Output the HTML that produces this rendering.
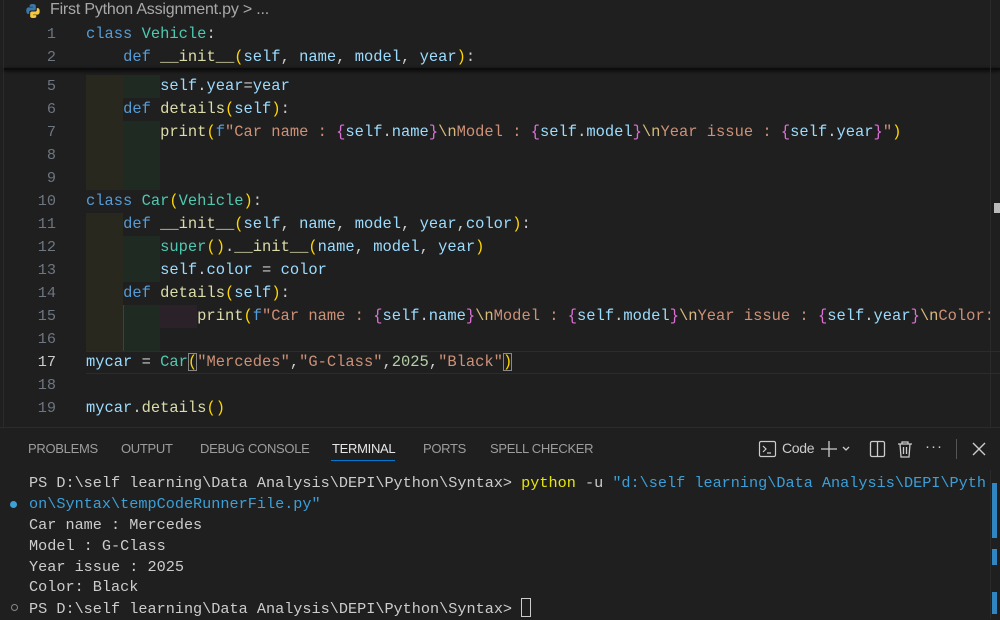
<!DOCTYPE html>
<html><head><meta charset="utf-8">
<style>
*{margin:0;padding:0;box-sizing:border-box}
body{width:1000px;height:619px;background:#1f1f1f;overflow:hidden;position:relative;font-family:"Liberation Mono",monospace;}
.ln{position:absolute;left:0;width:56px;text-align:right;color:#6e7681;font-size:15.2px;line-height:23px;height:23px;margin-top:1px}
.cl{position:absolute;left:86px;font-size:15.45px;line-height:23px;height:23px;white-space:pre;color:#cccccc;margin-top:1px}
.k{color:#569cd6}.c{color:#4ec9b0}.f{color:#dcdcaa}.v{color:#9cdcfe}.s{color:#ce9178}.y{color:#ffd700}.p{color:#da70d6}.e{color:#d7ba7d}.w{color:#cccccc}
.g1{position:absolute;left:86px;width:37px;background:#28281f}
.g2{position:absolute;left:123px;width:37px;background:#1f2a22}
.g3{position:absolute;left:160px;width:37px;background:#2b2129}
.gl{position:absolute;width:1px;background:#404040}
.tab{position:absolute;top:441px;font-family:"Liberation Sans",sans-serif;font-size:13px;color:#9d9d9d;letter-spacing:-0.3px}
.t{position:absolute;left:29px;font-size:15.2px;line-height:21px;white-space:pre;color:#cccccc}
.b{color:#3b9fd8}.yy{color:#e5e510}
</style></head><body>
<div style="position:absolute;left:3px;top:0;width:1px;height:427px;background:#2b2b2b"></div>
<svg style="position:absolute;left:25px;top:3px" width="16" height="16" viewBox="0 0 16 16"><path d="M7.8 1C4.5 1 4.7 2.4 4.7 2.4v1.5h3.2v.5H3.4S1.3 4.2 1.3 7.6s1.8 3.3 1.8 3.3h1.1V9.3s-.1-1.8 1.8-1.8h3.1s1.7 0 1.7-1.7V2.8S11 1 7.8 1z" fill="#3b77a8"/><path d="M8.2 15c3.3 0 3.1-1.4 3.1-1.4v-1.5H8.1v-.5h4.5s2.1.2 2.1-3.2-1.8-3.3-1.8-3.3h-1.1v1.6s.1 1.8-1.8 1.8H6.9s-1.7 0-1.7 1.7v3s-.2 1.8 3 1.8z" fill="#f7c93e"/></svg>
<div style="position:absolute;left:50px;top:1px;font-family:'Liberation Sans',sans-serif;font-size:16px;color:#a9a9a9;letter-spacing:-0.2px">First Python Assignment.py &gt; ...</div>

<div class="g1" style="top:75px;height:69px"></div>
<div class="g2" style="top:75px;height:23px"></div>
<div class="g2" style="top:121px;height:23px"></div>
<div class="g1" style="top:144px;height:46px"></div>
<div class="g2" style="top:144px;height:46px"></div>
<div class="g1" style="top:213px;height:138px"></div>
<div class="g2" style="top:236px;height:46px"></div>
<div class="g2" style="top:305px;height:46px"></div>
<div class="g3" style="top:305px;height:23px"></div>
<div class="gl" style="left:123px;top:305px;height:46px"></div>

<div style="position:absolute;left:86px;right:0;top:351px;height:23px;border-top:1px solid #2c2c2c;border-bottom:1px solid #2c2c2c"></div>

<div class="ln" style="top:22px">1</div><div class="cl" style="top:22px"><span class="k">class</span> <span class="c">Vehicle</span>:</div>
<div class="ln" style="top:45px">2</div><div class="cl" style="top:45px">    <span class="k">def</span> <span class="f">__init__</span><span class="y">(</span><span class="v">self</span>, <span class="v">name</span>, <span class="v">model</span>, <span class="v">year</span><span class="y">)</span>:</div>
<div style="position:absolute;left:4px;right:0;top:68px;height:2px;background:#0c0c0c;box-shadow:0 1px 3px #000"></div>
<div class="ln" style="top:74px">5</div><div class="cl" style="top:74px">        <span class="v">self</span>.<span class="v">year</span>=<span class="v">year</span></div>
<div class="ln" style="top:97px">6</div><div class="cl" style="top:97px">    <span class="k">def</span> <span class="f">details</span><span class="y">(</span><span class="v">self</span><span class="y">)</span>:</div>
<div class="ln" style="top:120px">7</div><div class="cl" style="top:120px">        <span class="f">print</span><span class="y">(</span><span class="k">f</span><span class="s">"Car name : </span><span class="p">{</span><span class="v">self</span>.<span class="v">name</span><span class="p">}</span><span class="e">\n</span><span class="s">Model : </span><span class="p">{</span><span class="v">self</span>.<span class="v">model</span><span class="p">}</span><span class="e">\n</span><span class="s">Year issue : </span><span class="p">{</span><span class="v">self</span>.<span class="v">year</span><span class="p">}</span><span class="s">"</span><span class="y">)</span></div>
<div class="ln" style="top:143px">8</div>
<div class="ln" style="top:166px">9</div>
<div class="ln" style="top:189px">10</div><div class="cl" style="top:189px"><span class="k">class</span> <span class="c">Car</span><span class="y">(</span><span class="c">Vehicle</span><span class="y">)</span>:</div>
<div class="ln" style="top:212px">11</div><div class="cl" style="top:212px">    <span class="k">def</span> <span class="f">__init__</span><span class="y">(</span><span class="v">self</span>, <span class="v">name</span>, <span class="v">model</span>, <span class="v">year</span>,<span class="v">color</span><span class="y">)</span>:</div>
<div class="ln" style="top:235px">12</div><div class="cl" style="top:235px">        <span class="c">super</span><span class="y">()</span>.<span class="f">__init__</span><span class="y">(</span><span class="v">name</span>, <span class="v">model</span>, <span class="v">year</span><span class="y">)</span></div>
<div class="ln" style="top:258px">13</div><div class="cl" style="top:258px">        <span class="v">self</span>.<span class="v">color</span> = <span class="v">color</span></div>
<div class="ln" style="top:281px">14</div><div class="cl" style="top:281px">    <span class="k">def</span> <span class="f">details</span><span class="y">(</span><span class="v">self</span><span class="y">)</span>:</div>
<div class="ln" style="top:304px">15</div><div class="cl" style="top:304px">            <span class="f">print</span><span class="y">(</span><span class="k">f</span><span class="s">"Car name : </span><span class="p">{</span><span class="v">self</span>.<span class="v">name</span><span class="p">}</span><span class="e">\n</span><span class="s">Model : </span><span class="p">{</span><span class="v">self</span>.<span class="v">model</span><span class="p">}</span><span class="e">\n</span><span class="s">Year issue : </span><span class="p">{</span><span class="v">self</span>.<span class="v">year</span><span class="p">}</span><span class="e">\n</span><span class="s">Color:</span></div>
<div class="ln" style="top:327px">16</div>
<div class="ln" style="top:350px;color:#cccccc">17</div><div class="cl" style="top:350px"><span class="v">mycar</span> = <span class="c">Car</span><span class="y" style="outline:1px solid #888;outline-offset:-1px">(</span><span class="s">"Mercedes"</span>,<span class="s">"G-Class"</span>,<span style="color:#b5cea8">2025</span>,<span class="s">"Black"</span><span class="y" style="outline:1px solid #888;outline-offset:-1px">)</span></div>
<div class="ln" style="top:373px">18</div>
<div class="ln" style="top:396px">19</div><div class="cl" style="top:396px"><span class="v">mycar</span>.<span class="f">details</span><span class="y">()</span></div>
<div style="position:absolute;left:994px;top:203px;width:6px;height:10px;background:#bbb"></div>
<div style="position:absolute;left:990px;top:0;width:1px;height:427px;background:#2a2a2a"></div>

<div style="position:absolute;left:0;right:0;top:427px;height:1px;background:#2b2b2b"></div>
<div class="tab" style="left:28px">PROBLEMS</div>
<div class="tab" style="left:121px">OUTPUT</div>
<div class="tab" style="left:200px">DEBUG CONSOLE</div>
<div class="tab" style="left:332px;color:#e7e7e7">TERMINAL</div>
<div style="position:absolute;left:331px;top:460px;width:64px;height:1px;background:#0078d4"></div>
<div class="tab" style="left:423px">PORTS</div>
<div class="tab" style="left:490px">SPELL CHECKER</div>
<svg style="position:absolute;left:758px;top:439px" width="20" height="20" viewBox="0 0 20 20" fill="none" stroke="#ccc" stroke-width="1.2"><rect x="1.5" y="2.5" width="16" height="15" rx="1.5"/><path d="M5 7l3 3-3 3M9 14h4"/></svg>
<div class="tab" style="left:782px;color:#ccc;font-size:14px;top:440px">Code</div>
<svg style="position:absolute;left:820px;top:439px" width="40" height="20" viewBox="0 0 40 20" fill="none" stroke="#ccc" stroke-width="1.3"><path d="M9 2v16M1 10h16"/><path d="M23 8l3 3 3-3"/></svg>
<svg style="position:absolute;left:868px;top:439px" width="20" height="20" viewBox="0 0 20 20" fill="none" stroke="#ccc" stroke-width="1.3"><rect x="2.5" y="2.5" width="14" height="15" rx="1.5"/><path d="M9.5 2.5v15"/></svg>
<svg style="position:absolute;left:895px;top:439px" width="20" height="20" viewBox="0 0 20 20" fill="none" stroke="#ccc" stroke-width="1.3"><path d="M3 5h14M7 5V3h6v2M5 5l1 13h8l1-13M8.5 8v7M11.5 8v7"/></svg>
<div style="position:absolute;left:925px;top:438px;color:#ccc;font-family:'Liberation Sans',sans-serif;font-size:15px;letter-spacing:1px">···</div>
<div style="position:absolute;left:956px;top:439px;width:1px;height:20px;background:#555"></div>
<svg style="position:absolute;left:970px;top:440px" width="18" height="18" viewBox="0 0 18 18" stroke="#ccc" stroke-width="1.4"><path d="M3 3l12 12M15 3L3 15"/></svg>

<div class="t" style="top:473px">PS D:\self learning\Data Analysis\DEPI\Python\Syntax&gt; <span class="yy">python</span> -u <span class="b">"d:\self learning\Data Analysis\DEPI\Pyth</span></div>
<div class="t" style="top:494px"><span class="b">on\Syntax\tempCodeRunnerFile.py"</span></div>
<div style="position:absolute;left:10px;top:501px;width:7px;height:7px;border-radius:50%;background:#3b9fd8"></div>
<div class="t" style="top:515px">Car name : Mercedes</div>
<div class="t" style="top:536px">Model : G-Class</div>
<div class="t" style="top:557px">Year issue : 2025</div>
<div class="t" style="top:577px">Color: Black</div>
<div class="t" style="top:598px">PS D:\self learning\Data Analysis\DEPI\Python\Syntax&gt; <span style="display:inline-block;width:10px;height:19px;border:1px solid #ccc;vertical-align:-4px"></span></div>
<div style="position:absolute;left:11px;top:604px;width:7px;height:7px;border-radius:50%;border:1px solid #888"></div>
<div style="position:absolute;left:990px;top:470px;width:1px;height:149px;background:#2a2a2a"></div>
<div style="position:absolute;left:992px;top:483px;width:5px;height:55px;background:#2f86c0"></div>
<div style="position:absolute;left:992px;top:549px;width:5px;height:16px;background:#2f86c0"></div>
<div style="position:absolute;left:992px;top:592px;width:5px;height:22px;background:#2f86c0"></div>
</body></html>
